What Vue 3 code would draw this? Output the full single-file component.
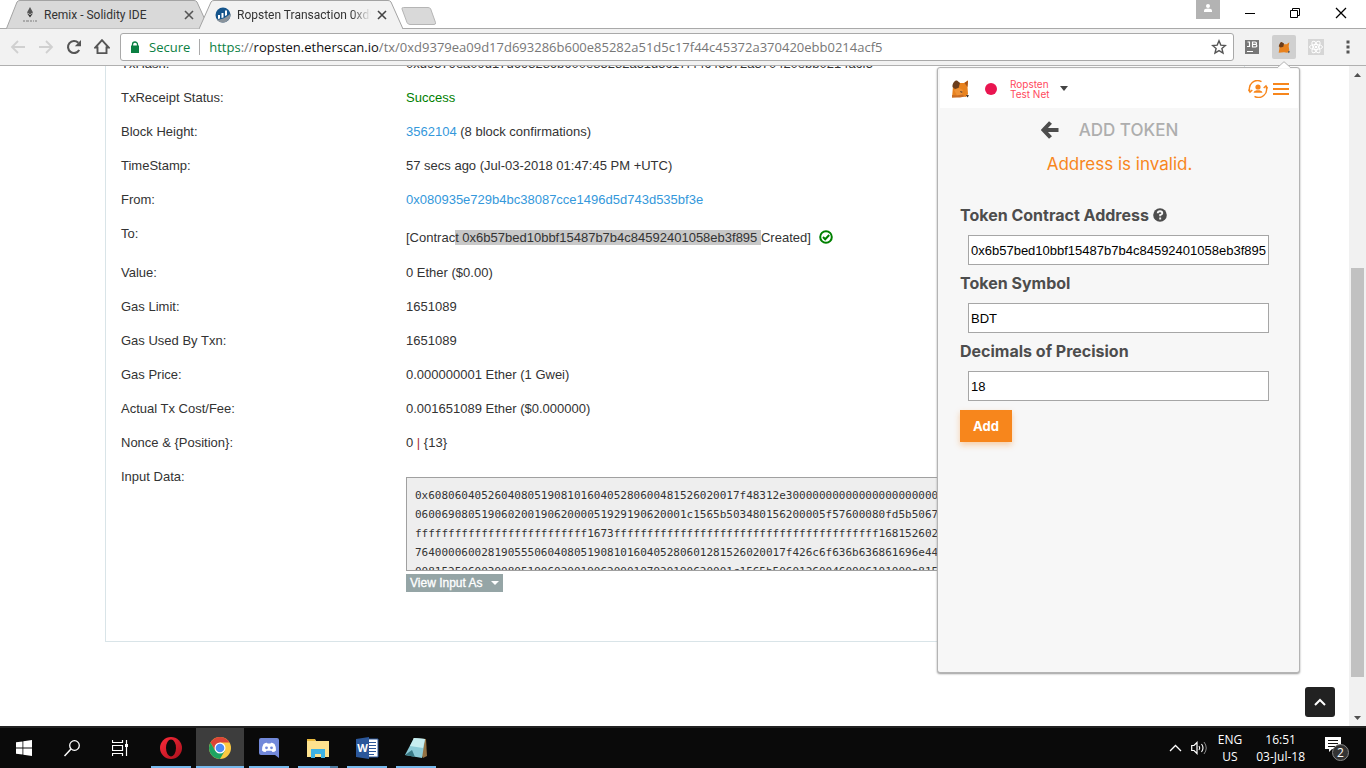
<script setup>
import { ref } from 'vue'

const rows = [
  { label: 'TxHash:', value: '0xd9379ea09d17d693286b600e85282a51d5c17f44c45372a370420ebb0214acf5' },
  { label: 'TxReceipt Status:', value: 'Success', kind: 'ok' },
  { label: 'Block Height:', link: '3562104', value: ' (8 block confirmations)' },
  { label: 'TimeStamp:', value: '57 secs ago (Jul-03-2018 01:47:45 PM +UTC)' },
  { label: 'From:', link: '0x080935e729b4bc38087cce1496d5d743d535bf3e' },
  { label: 'To:', kind: 'contract' },
  { label: 'Value:', value: '0 Ether ($0.00)' },
  { label: 'Gas Limit:', value: '1651089' },
  { label: 'Gas Used By Txn:', value: '1651089' },
  { label: 'Gas Price:', value: '0.000000001 Ether (1 Gwei)' },
  { label: 'Actual Tx Cost/Fee:', value: '0.001651089 Ether ($0.000000)' },
  { label: 'Nonce & {Position}:', kind: 'nonce' },
  { label: 'Input Data:', kind: 'input' }
]

const inputData = [
  '0x60806040526040805190810160405280600481526020017f48312e30' + '0'.repeat(22),
  '06006908051906020019062000051929190620001c1565b503480156200005f57600080fd5b50670',
  'f'.repeat(26) + '1673' + 'f'.repeat(40) + '1681526020',
  '76400006002819055506040805190810160405280601281526020017f426c6f636b636861696e446',
  '00815250600390805190602001906200010792919' + '0620001c1565b5060126004600061' + '01000a815'
].join('\n')

const address = ref('0x6b57bed10bbf15487b7b4c84592401058eb3f895')
const symbol = ref('BDT')
const decimals = ref('18')
</script>

<template>
  <div class="screen">
    <header class="tabs">
      <div class="tab">
        <svg class="tab-bg" viewBox="0 0 204 29" preserveAspectRatio="none"><path d="M0.5 28.5 L11 2 Q12 .5 14 .5 H188 Q190 .5 191 2 L203 28.5" fill="#d9d9d9" stroke="#a3a3a3" /></svg>
        <svg class="fav" viewBox="0 0 16 16"><path d="M8 0 5 5.4 8 7.2l3-1.8z" fill="#555" /><path d="M5 6.2 8 10.500l3-4.300-3 1.800z" fill="#333" /><path d="M1 14h2m1 0h3m1 0h2m1 0h1m1 0h2" stroke="#aaa" stroke-width="2" /></svg>
        <span class="tab-title">Remix - Solidity IDE</span>
        <button class="x" aria-label="Close tab"><svg viewBox="0 0 10 10"><path d="M1 1l8 8M9 1 1 9" stroke="#555" stroke-width="1.600" /></svg></button>
      </div>
      <div class="tab active">
        <svg class="tab-bg" viewBox="0 0 204 29" preserveAspectRatio="none"><path d="M0 29 L12 2 Q13 .5 15 .5 H189 Q191 .5 192 2 L204 29" fill="#f2f2f2" stroke="#a3a3a3" /></svg>
        <svg class="fav" viewBox="0 0 16 16"><circle cx="8" cy="8" r="7.500" fill="#15558c" /><path d="M3 12V8h2v3.500M6.500 11V6h2v4.500M10 9V3.500h2V8" fill="#fff" /><path d="M1.500 12.500C7 13 12 10 15.600 6.500 16.500 13 9 18.500 3 14z" fill="#8a939b" /></svg>
        <span class="tab-title fade">Ropsten Transaction 0xd9</span>
        <button class="x" aria-label="Close tab"><svg viewBox="0 0 10 10"><path d="M1 1l8 8M9 1 1 9" stroke="#444" stroke-width="1.600" /></svg></button>
      </div>
      <button class="newtab" aria-label="New tab"><svg viewBox="0 0 36 18"><path d="M1 2Q.5.500 2.500.500H27q2 0 2.700 1.500L34.500 15.500q.5 2-1.500 2H9q-2 0-3-2z" fill="#d9d9d9" stroke="#b5b5b5" /></svg></button>
      <div class="window-buttons">
        <button class="user" aria-label="Profile"><svg width="24" height="19" viewBox="0 0 24 19"><circle cx="12" cy="6" r="2" fill="#fff" /><path d="M8 12V10.500q0-2 4-2t4 2V12z" fill="#fff" /></svg></button>
        <button aria-label="Minimize"><svg width="46" height="28"><path d="M17 13.500h10" stroke="#000" /></svg></button>
        <button aria-label="Restore"><svg width="46" height="28"><path d="M16.500 10.500h7v7h-7zM18.500 10V8.500h7v7H24" fill="none" stroke="#000" /></svg></button>
        <button aria-label="Close"><svg width="46" height="28"><path d="M16 8l10 10M26 8 16 18" stroke="#000" stroke-width="1.300" /></svg></button>
      </div>
    </header>

    <nav class="toolbar">
      <button aria-label="Back"><svg class="nav-icon" viewBox="0 0 16 16"><path d="M15 8H2M8 2 2 8l6 6" fill="none" stroke="#d0d0d0" stroke-width="1.800" /></svg></button>
      <button aria-label="Forward"><svg class="nav-icon" viewBox="0 0 16 16"><path d="M1 8h13M8 2l6 6-6 6" fill="none" stroke="#d0d0d0" stroke-width="1.800" /></svg></button>
      <button aria-label="Reload"><svg class="nav-icon" viewBox="0 0 16 16"><path d="M13.200 11A6 6 0 1 1 12.300 3.800" fill="none" stroke="#555" stroke-width="2.100" /><path d="M15 1v6.200H8.800z" fill="#555" /></svg></button>
      <button aria-label="Home"><svg class="nav-icon" viewBox="0 0 16 16"><path d="M8 1.200 1.300 8.500H3.500v5.600h9V8.500h2.200z" fill="none" stroke="#555" stroke-width="1.900" /></svg></button>
      <div class="omnibox">
        <svg class="lock" viewBox="0 0 8 12"><path d="M1.500 5V3.500a2.500 2.500 0 0 1 5 0V5" fill="none" stroke="#0b8043" stroke-width="1.300" /><path d="M0 4.500h8V12H0z" fill="#0b8043" /></svg>
        <span class="secure">Secure</span>
        <span class="divider"></span>
        <span class="url"><b>https</b>://<i>ropsten.etherscan.io</i>/tx/0xd9379ea09d17d693286b600e85282a51d5c17f44c45372a370420ebb0214acf5</span>
        <button class="star" aria-label="Bookmark"><svg viewBox="0 0 16 16"><path d="M8 1.800l1.800 4.300 4.600.4-3.500 3 1.100 4.600L8 11.600 4 14.100l1.100-4.600-3.500-3 4.600-.4z" fill="none" stroke="#555" stroke-width="1.400" /></svg></button>
      </div>
      <div class="extensions">
        <button aria-label="JetBrains"><svg width="14" height="14" viewBox="0 0 14 14"><path d="M0 0h14v14H0z" fill="#777" /><path d="M2 6.500h2.500V2H2.500M7.500 2v5h3q1.500-.3 1.300-1.500-.2-1-1.300-1.100 1-.2 1-1.200T10 2zM8 4.400h2.500M2 11.500h6" fill="none" stroke="#fff" stroke-width="1.200" /></svg></button>
        <button class="lit" aria-label="MetaMask"><svg width="12" height="13" viewBox="0 0 18 18"><path d="M2 5 5 1l4 3h4l4-3-1 6 1 7-3 3-5-1-8 1 1-6z" fill="#e8821e" /><path d="M2 5Q3 0 6 1l3 2-1 5-4 1-3-2z" fill="#6b3d1c" /><path d="M15 14.500l3 .5-2 2.500z" fill="#333" /></svg></button>
        <button aria-label="React Developer Tools"><svg width="16" height="16" viewBox="0 0 16 16"><path d="M0 0h16v16H0z" fill="#d6d6d6" /><g fill="none" stroke="#fff"><ellipse cx="8" cy="8" rx="6.500" ry="2.500" /><ellipse cx="8" cy="8" rx="6.500" ry="2.500" transform="rotate(60 8 8)" /><ellipse cx="8" cy="8" rx="6.500" ry="2.500" transform="rotate(120 8 8)" /></g><circle cx="8" cy="8" r="1.300" fill="#fff" /></svg></button>
        <button aria-label="Menu"><svg width="4" height="14" viewBox="0 0 4 14"><path d="M.5.500h3v3h-3zM.5 5.500h3v3h-3zM.5 10.500h3v3h-3z" fill="#555" /></svg></button>
      </div>
    </nav>

    <main class="viewport">
      <div class="page">
        <section class="card">
          <table class="details">
            <tbody>
              <tr v-for="r in rows" :key="r.label" :class="r.kind">
                <th scope="row">{{ r.label }}</th>
                <td v-if="r.kind === 'contract'">[Contrac<mark>t 0x6b57bed10bbf15487b7b4c84592401058eb3f895 </mark>Created]<svg class="check" viewBox="0 0 14 14"><circle cx="7" cy="7" r="5.800" fill="none" stroke="#008000" stroke-width="2" /><path d="M4 7l2.200 2.200L10.200 5" fill="none" stroke="#008000" stroke-width="2" /></svg></td>
                <td v-else-if="r.kind === 'nonce'">0 <span class="bar">|</span> {13}</td>
                <td v-else-if="r.kind === 'input'">
                  <textarea readonly wrap="off" aria-label="Input Data" :value="inputData"></textarea>
                  <button class="view">View Input As<svg width="8" height="4" viewBox="0 0 8 4"><path d="M0 0h8L4 4z" fill="#fff" /></svg></button>
                </td>
                <td v-else><a v-if="r.link" href="#">{{ r.link }}</a>{{ r.value }}</td>
              </tr>
            </tbody>
          </table>
        </section>
        <button class="to-top" aria-label="Back to top"><svg width="12" height="8" viewBox="0 0 12 8"><path d="M1 7l5-5 5 5" fill="none" stroke="#fff" stroke-width="2" /></svg></button>
      </div>
      <div class="scrollbar">
        <svg width="7" height="4" viewBox="0 0 7 4"><path d="M0 4h7L3.500 0z" fill="#505050" /></svg>
        <span class="track"><span class="thumb"></span></span>
        <svg width="7" height="4" viewBox="0 0 7 4"><path d="M0 0h7L3.500 4z" fill="#505050" /></svg>
      </div>
    </main>

    <aside class="popup">
      <svg class="notch" viewBox="0 0 14 7"><path d="M0 7 7 .7 14 7" fill="#fff" stroke="#b4b4b4" /></svg>
      <header class="wallet-bar">
        <svg class="fox" viewBox="0 0 18 18"><path d="M2 6 5 1l4 2h4l4-2.500L16.500 7l.5 7-2 3-4-1-5 1-5 .5L1.500 12z" fill="#e8821e" /><path d="M1.500 5Q3 0 6 .5L9 3 7.500 8 4 9 1.500 7z" fill="#6b3d1c" /><path d="M17 .5 16.500 7 13.500 3z" fill="#a85418" /><path d="M3 10l5-2 4 2-1 5-5 .5z" fill="#ef9236" /><path d="M9 11l3 1-2 .8z" fill="#42302a" /><path d="M15 15l3 .3-1.500 2.200z" fill="#2b2624" /><path d="M1 15l5 .500 5-1 3 2-5 1H1z" fill="#c96c25" /></svg>
        <button class="network"><span class="dot"></span><span class="net-name"><span>Ropsten</span><span>Test Net</span></span><svg width="8" height="5" viewBox="0 0 8 5"><path d="M0 0h8L4 5z" fill="#444" /></svg></button>
        <button class="account" aria-label="Accounts"><svg width="20" height="18" viewBox="0 0 20 18"><g fill="none" stroke="#f7861c" stroke-width="1.400"><path d="M2 11.500A8 8 0 0 1 13.500 1.700M18 6.500A8 8 0 0 1 6.500 16.300" /><path d="M.3 9.500 2 12.200 4.300 10M15.700 8 18 5.800 19.700 8.500" /></g><circle cx="10" cy="7" r="2.600" fill="#f7861c" /><path d="M5.500 12.800q0-2 3-2.600h3q3 .6 3 2.600z" fill="#f7861c" /></svg></button>
        <button class="burger" aria-label="Menu"><svg width="16" height="12" viewBox="0 0 16 12"><path d="M0 1h16M0 6h16M0 11h16" stroke="#f7861c" stroke-width="2" /></svg></button>
      </header>
      <form class="token-form" @submit.prevent>
        <div class="heading"><button type="button" aria-label="Back"><svg width="18" height="18" viewBox="0 0 18 18"><path d="M9.500 1.500 2.500 9l7 7.500M3 9h14.500" fill="none" stroke="#4d4d4d" stroke-width="4" /></svg></button><h2>ADD TOKEN</h2></div>
        <p class="error">Address is invalid.</p>
        <label for="address">Token Contract Address <svg class="help" viewBox="0 0 14 14"><circle cx="7" cy="7" r="6.800" fill="#4d4d4d" /><path d="M4.700 5.300Q4.800 3.300 7 3.300t2.300 1.900Q9.300 6.300 7.200 7v1.300M7.200 9.500v2" fill="none" stroke="#f7f7f7" stroke-width="1.900" /></svg></label>
        <input id="address" v-model="address">
        <label for="symbol">Token Symbol</label>
        <input id="symbol" v-model="symbol">
        <label for="decimals">Decimals of Precision</label>
        <input id="decimals" v-model="decimals">
        <button class="add">Add</button>
      </form>
    </aside>

    <footer class="taskbar">
      <button class="sys" aria-label="Start"><svg width="16" height="16" viewBox="0 0 16 16"><path d="M0 2.300 6.500 1.400v6.200H0zM7.300 1.300 16 0v7.600H7.300zM0 8.400h6.500v6.200L0 13.700zM7.300 8.400H16V16l-8.700-1.300z" fill="#fff" /></svg></button>
      <button class="sys" aria-label="Search"><svg width="16" height="17" viewBox="0 0 16 17"><circle cx="10.500" cy="5.500" r="4.800" fill="none" stroke="#fff" stroke-width="1.300" /><path d="M7 9 .5 16" stroke="#fff" stroke-width="1.500" /></svg></button>
      <button class="sys" aria-label="Task view"><svg width="16" height="16" viewBox="0 0 16 16"><path d="M.5 0v2.500h10V0M.5 5.500h10v5H.5zM.5 16v-2.500h10V16M14.500 0v16" fill="none" stroke="#fff" stroke-width="1.200" /><path d="M13 4h3v3h-3z" fill="#fff" /></svg></button>
      <div class="apps">
        <button aria-label="Opera"><svg viewBox="0 0 24 24"><defs><linearGradient id="opera" x1="0" x2="1" y1="0" y2="1"><stop offset="0" stop-color="#ff2b3a" /><stop offset="1" stop-color="#a8101c" /></linearGradient></defs><circle cx="12" cy="12" r="11" fill="url(#opera)" /><ellipse cx="12" cy="12" rx="5" ry="8.500" fill="#0a0a0a" /></svg></button>
        <button class="current" aria-label="Chrome"><svg viewBox="0 0 24 24"><circle cx="12" cy="12" r="11" fill="#fbc942" /><path d="M2.500 6.500A11 11 0 0 1 21.500 6.500H12L7.200 14.800z" fill="#db4437" /><path d="M2.500 6.500A11 11 0 0 0 12 23l4.800-8.300-9.600 0z" fill="#1da462" /><circle cx="12" cy="12" r="5.500" fill="#fff" /><circle cx="12" cy="12" r="4.300" fill="#4c8bf5" /></svg></button>
        <button aria-label="Discord"><svg viewBox="0 0 24 24"><path d="M4 2h16q2 0 2 2v18l-4-3H4q-2 0-2-2V4q0-2 2-2z" fill="#7289da" /><path d="M6.500 8q2.500-1.500 3.500-1.200l.5.700h3l.5-.7q1-.3 3.500 1.200 2 3.500 1.500 6.500-1.500 1.500-3.500 1.500l-1-1.300h-5L8.500 16q-2 0-3.500-1.500Q4.500 11.500 6.500 8z" fill="#fff" /><circle cx="9.500" cy="11.800" r="1.400" fill="#7289da" /><circle cx="14.500" cy="11.800" r="1.400" fill="#7289da" /></svg></button>
        <button class="many" aria-label="File Explorer"><svg viewBox="0 0 24 24"><path d="M1 3h8l1 2h13v16H1z" fill="#fde28e" /><path d="M1 3h8v2H1z" fill="#e9b93d" /><path d="M5 22v-9h14v9h-4v-4H9v4z" fill="#3db2e4" /></svg></button>
        <button class="word" aria-label="Word"><svg viewBox="0 0 24 24"><path d="M13 3h10v18H13z" fill="#fff" stroke="#2b579a" /><path d="M14 6.500h7M14 9.500h7M14 12.500h7M14 15.500h7M14 18.500h5" stroke="#2b579a" /><path d="M1 3 14 1v22L1 21z" fill="#2b579a" /><text x="7.500" y="16" text-anchor="middle" font-size="11" font-weight="700" fill="#fff">W</text></svg></button>
        <button aria-label="Notepad"><svg viewBox="0 0 24 24"><path d="M9 2 22 3l1 17-4 2z" fill="#927143" /><path d="M10 2 21 3l-3 19L1 19z" fill="#8ccbd7" /><path d="M10 2 21 3l-2 9L6 10z" fill="#c7edf0" /><path d="M1 19l7-5 3 7z" fill="#397985" /></svg></button>
      </div>
      <div class="tray">
        <button aria-label="Show hidden icons"><svg width="13" height="8" viewBox="0 0 13 8"><path d="M1 7l5.500-5.500L12 7" fill="none" stroke="#fff" stroke-width="1.300" /></svg></button>
        <button aria-label="Volume"><svg width="17" height="14" viewBox="0 0 17 14"><path d="M.7 4.500H3L6 1.500v11L3 9.500H.7z" fill="none" stroke="#fff" stroke-width="1.200" /><path d="M8 5q1.500 2 0 4M10.500 3q3 4 0 8" fill="none" stroke="#fff" stroke-width="1.100" /><path d="M13 1q4.500 6 0 12" fill="none" stroke="#888" /></svg></button>
        <span class="lang">ENG<br>US</span>
        <span class="clock">16:51<br>03-Jul-18</span>
        <button class="notes" aria-label="Notifications"><svg width="24" height="26" viewBox="0 0 24 26"><path d="M0 2h16v12H7l-3 3v-3H0z" fill="#fff" /><path d="M3 5.500h10M3 8.500h10M3 11.500h7" stroke="#111" /></svg><span class="badge">2</span></button>
      </div>
    </footer>
  </div>
</template>

<style>
body { margin: 0; overflow: hidden; }
</style>

<style scoped>
* { box-sizing: border-box; }
button { border: 0; padding: 0; margin: 0; background: none; font: inherit; color: inherit; display: flex; align-items: center; justify-content: center; }
svg { display: block; flex: none; }
.screen { height: 100vh; display: flex; flex-direction: column; position: relative; background: #fff; font-family: "Liberation Sans", Arial, sans-serif; }

.tabs { height: 28px; display: flex; padding-left: 6px; flex: none; position: relative; z-index: 1; font-family: Roboto, sans-serif; font-size: 12px; color: #333; }
.tab { position: relative; width: 204px; height: 29px; margin-right: -11px; display: flex; align-items: center; gap: 6px; padding: 0 16px; }
.active { z-index: 1; }
.tab-bg { position: absolute; inset: 0; width: 100%; height: 100%; z-index: -1; }
.tab:not(.active) { z-index: 0; }
.fav { width: 16px; height: 16px; }
.tab-title { flex: 1; white-space: nowrap; overflow: hidden; }
.fade { -webkit-mask-image: linear-gradient(90deg, #000 85%, transparent); mask-image: linear-gradient(90deg, #000 85%, transparent); }
.x svg { width: 10px; height: 10px; }
.newtab { align-self: flex-start; margin: 7px 0 0 9px; }
.newtab svg { width: 36px; height: 18px; }
.window-buttons { margin-left: auto; display: flex; height: 28px; }
.user { background: #b3b3b3; width: 24px; height: 19px; margin-right: 8px; }

.toolbar { height: 38px; flex: none; background: #f2f2f2; border-top: 1px solid #a9a9a9; border-bottom: 1px solid #b0b0b0; display: flex; align-items: center; padding: 0 6px 0 4px; }
.toolbar > button { width: 28px; }
.nav-icon { width: 16px; height: 16px; }
.omnibox { flex: 1; height: 28px; margin-left: 4px; background: #fff; border: 1px solid #a9a9a9; border-radius: 3px; display: flex; align-items: center; padding: 0 6px 0 10px; font: 13px "Open Sans", sans-serif; }
.lock { width: 8px; height: 12px; }
.secure { color: #0b8043; margin-left: 10px; }
.divider { width: 1px; height: 16px; background: #aaa; margin: 0 9px; }
.url { color: #777; white-space: nowrap; }
.url b { font-weight: 400; color: #0b8043; }
.url i { font-style: normal; color: #111; }
.star { margin-left: auto; }
.star svg { width: 16px; height: 16px; }
.extensions { display: flex; margin-left: 6px; gap: 8px; }
.extensions button { width: 24px; height: 24px; border-radius: 2px; }
.extensions .lit { background: #d0d0d0; }

.viewport { flex: 1; min-height: 0; display: flex; overflow: hidden; }
.page { flex: 1; min-width: 0; position: relative; overflow: hidden; padding: 0 104px 0 105px; }
.card { max-width: 1142px; margin: -20px auto 0; border: 1px solid #d9e4e8; padding: 0 15px 49px; }
.details { width: 100%; border-collapse: collapse; table-layout: fixed; font-size: 13px; line-height: 18px; color: #333; }
.details th { width: 285px; font-weight: 400; text-align: left; vertical-align: top; padding: 8px 0; }
.details td { padding: 8px 0; vertical-align: top; white-space: nowrap; }
.details a { color: #3498db; text-decoration: none; }
.ok td { color: #008000; }
.details .contract td { padding: 12px 0 9px; }
.details mark { background: #c8c8c8; color: inherit; }
.check { display: inline-block; width: 14px; height: 14px; margin-left: 8px; vertical-align: -2px; }
.bar { color: #a33; }
.details .input td { padding: 17px 0 0; }
textarea { display: block; width: 100%; height: 94px; resize: none; overflow: hidden; border: 1px solid #a0a0a0; padding: 8px; margin: 0; background: #eee; color: #333; font: 11px/19px "DejaVu Sans Mono", monospace; outline: 0; }
.view { margin-top: 3px; height: 18px; background: #95a5a6; color: #fff; font-size: 12px; padding: 0 4px; gap: 8px; font-weight: 400; -webkit-text-stroke: 0.3px #fff; }
.to-top { position: absolute; right: 14px; bottom: 9px; width: 30px; height: 30px; background: #222; border-radius: 3px; }
.scrollbar { width: 17px; background: #f1f1f1; display: flex; flex-direction: column; align-items: center; padding: 7px 0 6px; }
.track { flex: 1; width: 13px; display: flex; flex-direction: column; justify-content: flex-end; }
.thumb { height: 64%; background: #c1c1c1; margin-bottom: 39px; }

.popup { position: absolute; top: 67px; right: 66px; width: 363px; height: 606px; background: #f7f7f7; border: 1px solid #b4b4b4; border-radius: 3px; box-shadow: 0 1px 2px #999; padding: 1px 1px 1px 2px; color: #4d4d4d; font-family: Inter, sans-serif; }
.notch { position: absolute; width: 14px; height: 7px; right: 8px; top: -7px; }
.wallet-bar { height: 39px; background: #fff; display: flex; align-items: center; padding: 0 9px 0 11px; }
.fox { width: 18px; height: 18px; }
.network { margin-left: 16px; color: #ff4a5d; font-size: 10px; line-height: 10px; text-align: left; }
.dot { width: 12px; height: 12px; border-radius: 50%; background: #e91550; margin-right: 13px; }
.net-name { margin-right: 10px; display: flex; flex-direction: column; }
.account { margin-left: auto; }
.burger { margin-left: 5px; }
.token-form { padding: 10px 19px 10px 20px; }
.heading { display: flex; align-items: center; justify-content: center; gap: 20px; height: 24px; margin-right: 20px; }
.heading h2 { margin: 0; font-size: 17px; font-weight: 500; color: #aeaeae; }
.error { color: #f7861c; font-size: 17px; line-height: 20px; text-align: center; margin: 12px 0 30px; }
label { display: flex; align-items: center; gap: 4px; font-size: 16px; font-weight: 700; line-height: 22px; }
.help { width: 14px; height: 14px; }
input { display: block; width: calc(100% - 18px); height: 30px; margin: 9px 0 7px 8px; border: 1px solid #a6a6a6; padding: 0 2px; background: #fff; color: #000; font: 13px "Liberation Sans", Arial, sans-serif; outline: 0; }
.add { width: 52px; height: 32px; margin-top: 9px; background: #f7861c; color: #fff; font-size: 13px; font-weight: 700; box-shadow: 0 3px 6px rgba(247, 134, 28, .36); }

.taskbar { height: 42px; flex: none; background: #0a0a0a; border-top: 2px solid #222; display: flex; color: #fff; font-family: "Open Sans", sans-serif; }
.sys { width: 48px; }
.apps { display: flex; gap: 1px; margin-left: 3px; }
.apps button { width: 48px; position: relative; }
.apps button::after { content: ""; position: absolute; left: 4px; right: 4px; bottom: 0; height: 2px; background: #76b9ed; }
.apps .current { background: #3d3d3d; }
.apps .current::after { left: 0; right: 0; }
.apps .many::after { border-right: 8px solid #4d7ba0; }
.apps svg { width: 24px; height: 24px; }
.tray { margin-left: auto; display: flex; align-items: center; padding-right: 15px; font-size: 12px; line-height: 17px; text-align: center; }
.tray button:nth-child(2) { margin-left: 9px; }
.lang { margin-left: 10px; }
.clock { margin-left: 14px; }
.notes { position: relative; margin-left: 20px; width: 26px; height: 26px; justify-content: flex-start; }
.badge { position: absolute; left: 7px; top: 9px; width: 17px; height: 17px; border-radius: 50%; background: #333; border: 1px solid #888; font-size: 12px; line-height: 15px; }
</style>
